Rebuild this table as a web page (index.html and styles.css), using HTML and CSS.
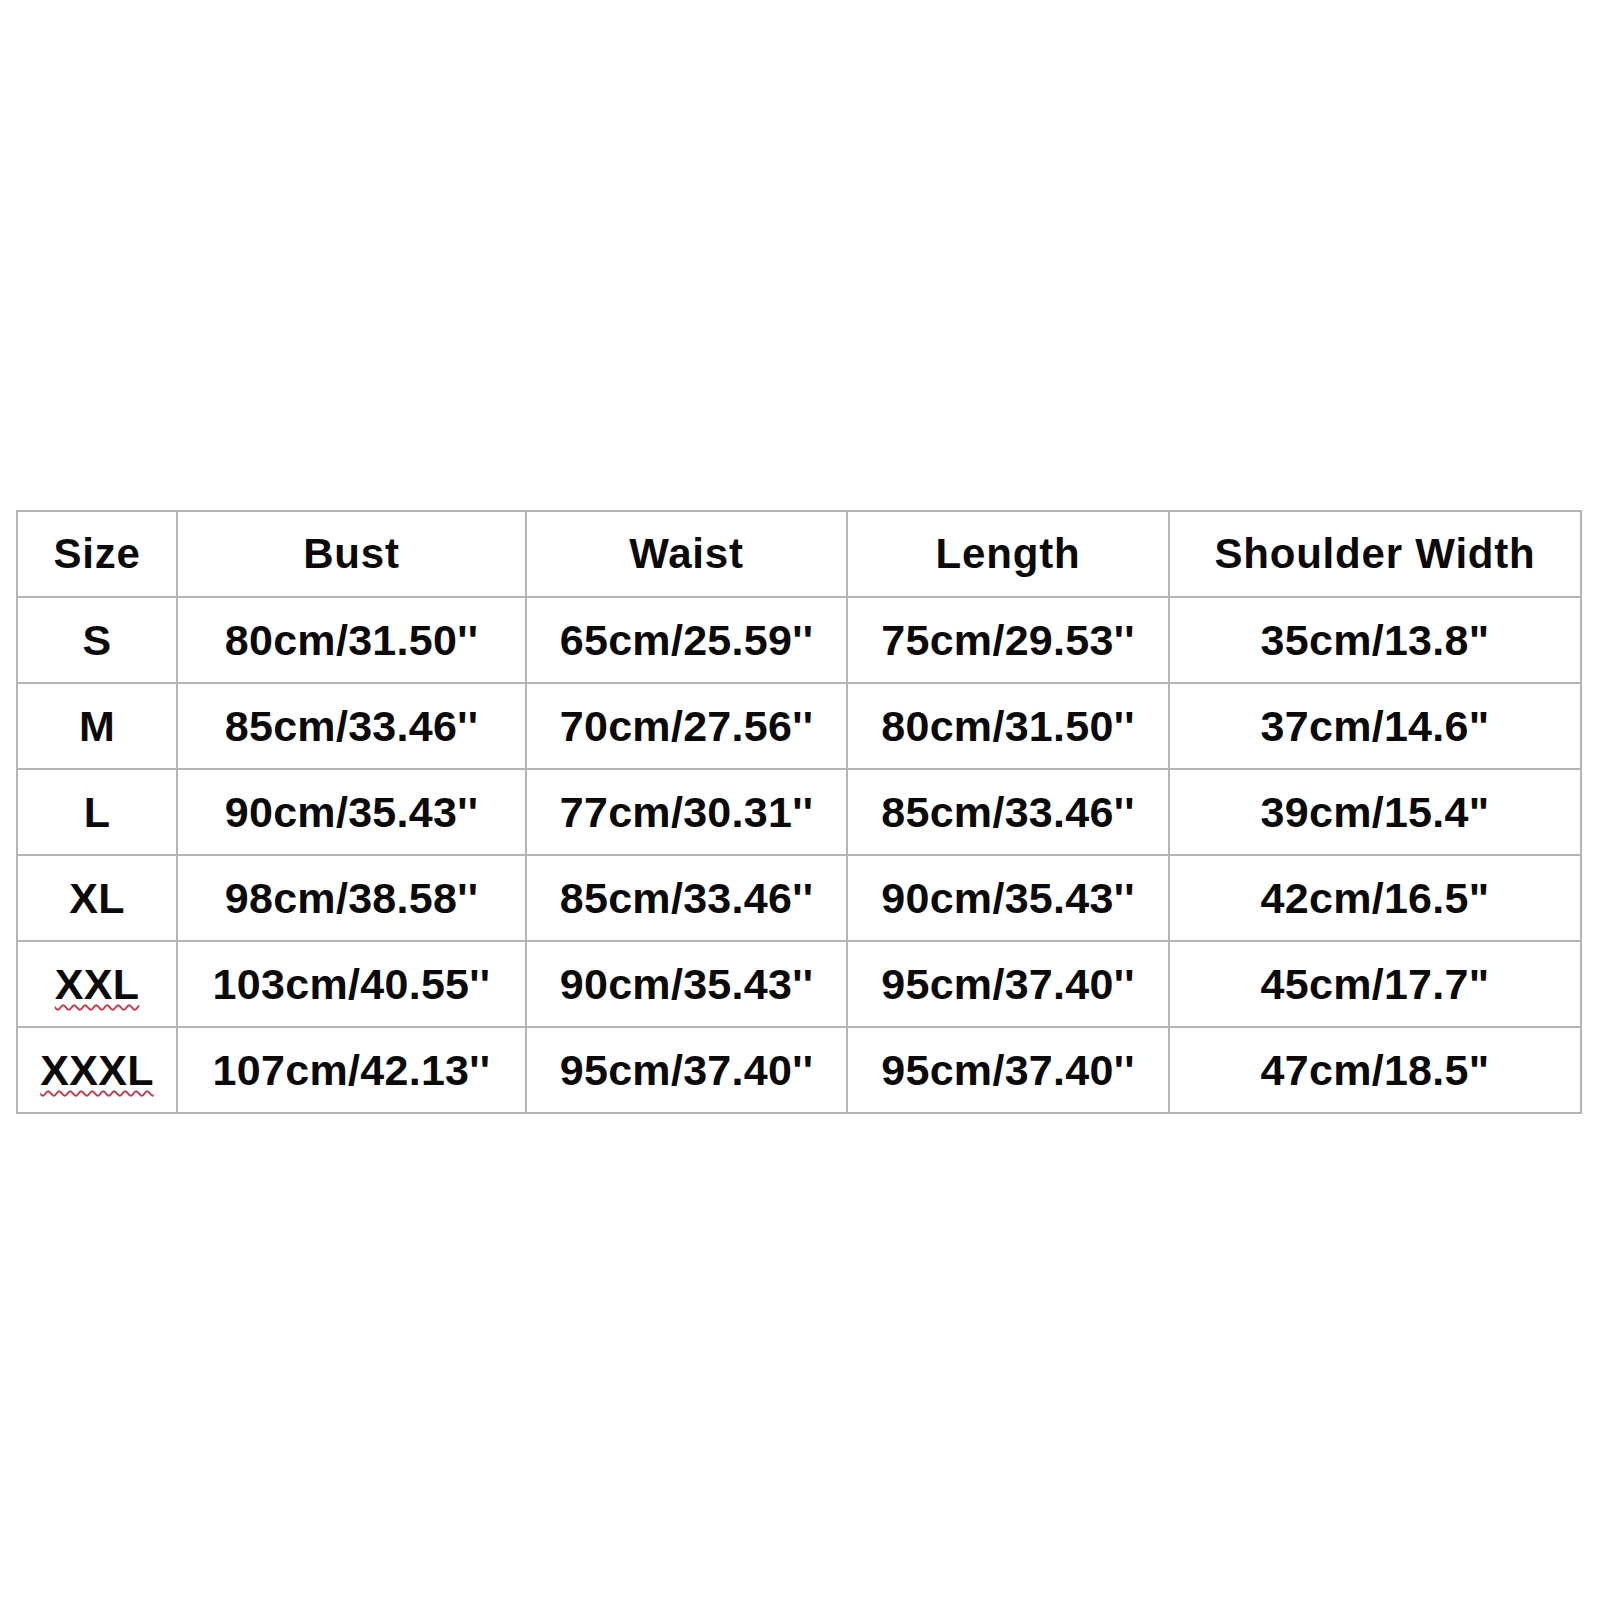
FILE: index.html
```html
<!DOCTYPE html>
<html>
<head>
<meta charset="utf-8">
<link rel="stylesheet" href="styles.css">
</head>
<body>
<div class="chart">
  <div class="cell head">Size</div><div class="cell head">Bust</div><div class="cell head">Waist</div><div class="cell head">Length</div><div class="cell head">Shoulder Width</div>
  <div class="cell">S</div><div class="cell">80cm/31.50''</div><div class="cell">65cm/25.59''</div><div class="cell">75cm/29.53''</div><div class="cell">35cm/13.8"</div>
  <div class="cell">M</div><div class="cell">85cm/33.46''</div><div class="cell">70cm/27.56''</div><div class="cell">80cm/31.50''</div><div class="cell">37cm/14.6"</div>
  <div class="cell">L</div><div class="cell">90cm/35.43''</div><div class="cell">77cm/30.31''</div><div class="cell">85cm/33.46''</div><div class="cell">39cm/15.4"</div>
  <div class="cell">XL</div><div class="cell">98cm/38.58''</div><div class="cell">85cm/33.46''</div><div class="cell">90cm/35.43''</div><div class="cell">42cm/16.5"</div>
  <div class="cell"><span class="spell">XXL</span></div><div class="cell">103cm/40.55''</div><div class="cell">90cm/35.43''</div><div class="cell">95cm/37.40''</div><div class="cell">45cm/17.7"</div>
  <div class="cell"><span class="spell">XXXL</span></div><div class="cell">107cm/42.13''</div><div class="cell">95cm/37.40''</div><div class="cell">95cm/37.40''</div><div class="cell">47cm/18.5"</div>
</div>
</body>
</html>
```
FILE: styles.css
```css
html, body {
  margin: 0;
  background: #ffffff;
}
body {
  padding: 510px 0 0 16px;
  font-family: "Liberation Sans", Arial, sans-serif;
}
.chart {
  display: grid;
  grid-template-columns: 160px 349px 321px 322px 412px;
  grid-auto-rows: 86px;
  width: max-content;
  border-left: 2px solid #b4b4b4;
  border-top: 2px solid #b4b4b4;
}
.cell {
  box-sizing: border-box;
  border-right: 2px solid #b4b4b4;
  border-bottom: 2px solid #b4b4b4;
  display: flex;
  align-items: center;
  justify-content: center;
  font-size: 43px;
  letter-spacing: 0.3px;
  font-weight: bold;
  color: #0a0a0a;
  white-space: nowrap;
  padding-top: 1px;
}
.cell.head {
  font-size: 42px;
  letter-spacing: 0.8px;
  padding-top: 0;
}
.spell {
  text-decoration: underline wavy #c4384a;
  text-decoration-thickness: 1.5px;
  text-underline-offset: 5px;
}
```
